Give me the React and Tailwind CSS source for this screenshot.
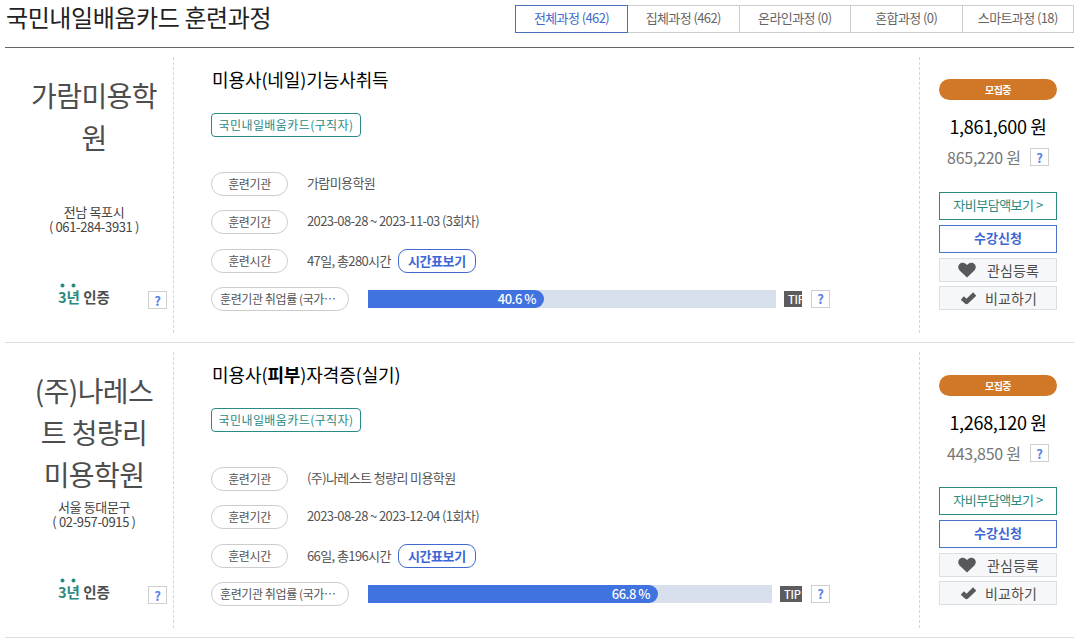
import clsx from "clsx";

const tabs = [
  { name: "전체과정", count: 462 },
  { name: "집체과정", count: 462 },
  { name: "온라인과정", count: 0 },
  { name: "혼합과정", count: 0 },
  { name: "스마트과정", count: 18 },
];

const courses = [
  {
    id: 1,
    school: ["가람미용학", "원"],
    region: "전남 목포시",
    phone: "061-284-3931",
    title: <>미용사(네일)기능사취득</>,
    org: "가람미용학원",
    period: "2023-08-28 ~ 2023-11-03 (3회차)",
    time: "47일, 총280시간",
    rate: "40.6 %",
    fill: 176,
    track: 408,
    tipWidth: 18,
    price: "1,861,600 원",
    selfPay: "865,220 원",
    top: "pt-[22px]",
    gap: "mt-[20px]",
  },
  {
    id: 2,
    school: ["(주)나레스", "트 청량리", "미용학원"],
    region: "서울 동대문구",
    phone: "02-957-0915",
    title: (
      <>
        미용사(<b>피부</b>)자격증(실기)
      </>
    ),
    org: "(주)나레스트 청량리 미용학원",
    period: "2023-08-28 ~ 2023-12-04 (1회차)",
    time: "66일, 총196시간",
    rate: "66.8 %",
    fill: 290,
    track: 404,
    tipWidth: 22,
    price: "1,268,120 원",
    selfPay: "443,850 원",
    top: "pt-[23px]",
    gap: "mt-[19px]",
  },
];

const HelpBox = () => (
  <button className="flex h-[18px] w-[19px] shrink-0 items-center justify-center border border-[#cfcfcf] bg-white text-[13px] leading-none font-bold text-[#5b82e8]">
    ?
  </button>
);

const Label = ({ wide, children }) => (
  <span
    className={clsx(
      "flex h-[24px] shrink-0 items-center rounded-full border border-[#ccc] text-[12px] text-[#555]",
      wide
        ? "w-[138px] pl-[8px] tracking-[-0.4px]"
        : "w-[77px] justify-center tracking-[-0.4px]"
    )}
  >
    {children}
  </span>
);

const Row = ({ label, children }) => (
  <div className="flex h-[25px] items-center">
    <Label>{label}</Label>
    <div className="ml-[19px] flex items-center text-[13px] tracking-[-0.6px] text-[#555]">
      {children}
    </div>
  </div>
);

const School = ({ course }) => (
  <div className="flex w-[169px] flex-col border-r border-dashed border-[#d5d5d5] pt-[17px] pl-[10px] text-center">
    <div className="h-[130px] text-[28px] leading-[42px] tracking-[-0.6px] text-[#4d4d4d]">
      {course.school.map((line) => (
        <p key={line}>{line}</p>
      ))}
    </div>
    <div className="text-[13px] leading-[15px] tracking-[-0.35px] text-[#444]">
      <p>{course.region}</p>
      <p>( {course.phone} )</p>
    </div>
    <div className="mt-[49px] flex items-start justify-between pr-[6px] pl-[43px]">
      <div className="flex flex-col">
        {/* accent dots over the mark */}
        <svg width="22" height="5" className="fill-[#2a8a80]">
          <circle cx="4.5" cy="2.5" r="2" />
          <circle cx="15.5" cy="2.5" r="2" />
        </svg>
        <p className="text-[14.5px] leading-[18px] font-bold text-[#4d4d4d]">
          <span className="text-[#2a8a80]">3년</span> 인증
        </p>
      </div>
      <div className="pt-[8px]">
        <HelpBox />
      </div>
    </div>
  </div>
);

const Detail = ({ course }) => (
  <div className="flex w-[746px] flex-col border-r border-dashed border-[#d5d5d5] pt-[9px] pl-[37px]">
    <h3 className="pl-px text-[18px] leading-[27px] tracking-[-0.1px] text-black">
      {course.title}
    </h3>
    <span className="mt-[20px] flex h-[24px] w-[150px] items-center justify-center rounded-[4px] border border-[#2a8a85] text-[12px] tracking-[0.4px] text-[#2a8a85]">
      국민내일배움카드(구직자)
    </span>
    <div className="mt-[34px] flex flex-col gap-[13.6px]">
      <Row label="훈련기관">
        <p className="pb-[2px]">{course.org}</p>
      </Row>
      <Row label="훈련기간">
        <p className="pb-[2px]">{course.period}</p>
      </Row>
      <Row label="훈련시간">
        {course.time}
        <button className="ml-[7px] flex h-[24px] w-[78px] items-center justify-center rounded-[9px] border border-[#4169cf] font-bold tracking-[-0.4px] text-[#3b66d6]">
          시간표보기
        </button>
      </Row>
      <div className="flex h-[25px] items-center">
        <Label wide>훈련기관 취업률 (국가⋯</Label>
        <div
          className="ml-[19px] h-[18px] bg-[#d8dfed]"
          style={{ width: course.track }}
        >
          <div
            className="flex h-full items-center justify-end rounded-r-[9px] bg-[#4072e0] pr-[8px] pb-[2px] text-[13px] font-medium tracking-[-0.5px] text-white"
            style={{ width: course.fill }}
          >
            {course.rate}
          </div>
        </div>
        <div
          className="ml-[8px] flex h-[16px] items-center overflow-hidden bg-[#5c5c5e] pl-[4px] text-[11px] font-medium tracking-[-0.2px] text-white"
          style={{ width: course.tipWidth }}
        >
          TIP
        </div>
        <div className="ml-[9px] pb-px">
          <HelpBox />
        </div>
      </div>
    </div>
  </div>
);

const Actions = ({ course }) => (
  <div className={clsx("flex w-[137px] flex-col pl-[19px]", course.top)}>
    <span className="flex h-[21px] items-center justify-center rounded-full bg-[#d07828] pb-px text-[10px] font-bold tracking-[-0.5px] text-white">
      모집중
    </span>
    <p className="mt-[12px] text-center text-[18px] leading-[28px] tracking-[-0.3px] text-black">
      {course.price}
    </p>
    <div className="mt-[2px] flex h-[30px] items-center justify-between pr-[8px] pl-[8px] text-[16px] tracking-[-0.25px] text-[#777]">
      {course.selfPay}
      <HelpBox />
    </div>
    <button
      className={clsx(
        "h-[28px] border border-[#2a8a80] pb-[2px] text-[13px] leading-[24px] tracking-[-0.5px] text-[#2a8a80]",
        course.gap
      )}
    >
      자비부담액보기 &gt;
    </button>
    <button className="mt-[5px] h-[28px] border border-[#4a72c8] pb-[2px] text-[13px] leading-[24px] font-bold text-[#3b66d6]">
      수강신청
    </button>
    <button className="mt-[5px] flex h-[24px] items-center border border-[#dcdfe2] bg-[#f6f7f9] pl-[18px] text-[14px] tracking-[0.1px] text-[#4d4d4d]">
      <svg width="18" height="16" viewBox="0 0 18 16" className="mr-[11px] fill-[#58595b]">
        <path d="M9 15.5 1.6 8.4C-.2 6.600-.2 3.700 1.500 2 3.200.3 6 .2 7.800 1.900L9 3.100l1.200-1.200C12 .2 14.800.3 16.500 2c1.700 1.700 1.700 4.600-.1 6.400z" />
      </svg>
      관심등록
    </button>
    <button className="mt-[4px] flex h-[24px] items-center border border-[#dcdfe2] bg-[#f6f7f9] pl-[20px] text-[14px] tracking-[0.1px] text-[#4d4d4d]">
      <svg width="17" height="14" viewBox="0 0 17 14" className="mr-[8px] fill-none stroke-[#58595b]">
        <path d="M2.300 7 6.500 10.800 14.700 3" strokeWidth="4.6" strokeLinejoin="round" />
      </svg>
      비교하기
    </button>
  </div>
);

const App = () => {
  return (
    <div className="h-[643px] w-[1079px] overflow-hidden bg-white pr-[5px] pl-[5px] font-['Noto_Sans_CJK_KR',sans-serif]">
      <header className="flex h-[48px] items-start justify-between border-b border-[#666]">
        <h2 className="pl-px text-[24px] leading-[33px] tracking-[-0.4px] text-[#222]">
          국민내일배움카드 훈련과정
        </h2>
        <nav className="mt-[5px] flex">
          {tabs.map((tab, i) => (
            <button
              key={tab.name}
              className={clsx(
                "h-[28px] border pb-[2px] text-[13px] leading-[24px] tracking-[-0.6px]",
                i === 0
                  ? "w-[113px] border-[#4a72b8] text-[#4169cf]"
                  : "w-[111.5px] border-l-0 border-[#ccc] text-[#666]"
              )}
            >
              {tab.name} ({tab.count})
            </button>
          ))}
        </nav>
      </header>
      {courses.map((course) => (
        <section
          key={course.id}
          className="flex h-[295px] border-b border-[#ddd] py-[9px]"
        >
          <School course={course} />
          <Detail course={course} />
          <Actions course={course} />
        </section>
      ))}
    </div>
  );
};

export default App;
